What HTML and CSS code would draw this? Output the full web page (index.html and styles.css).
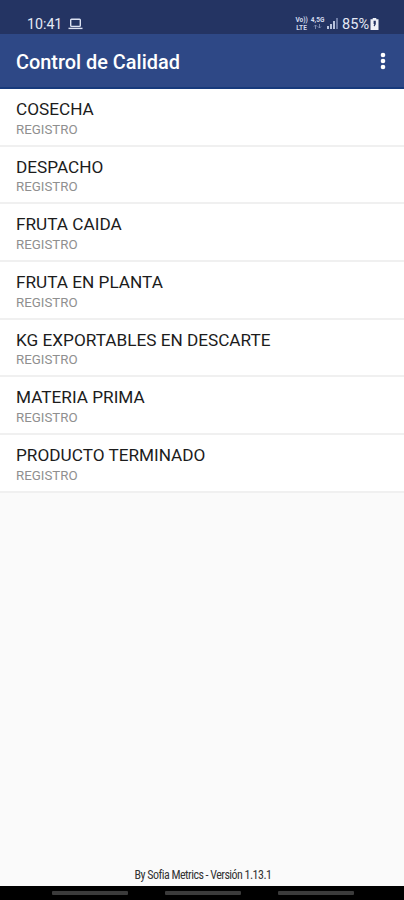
FILE: index.html
```
<!DOCTYPE html>
<html lang="es">
<head>
    <meta charset="UTF-8">
    <meta name="viewport" content="width=device-width, initial-scale=1.0">
    <title>Control de Calidad</title>
    <link rel="stylesheet" href="styles.css">
</head>
<body>
    <div class="status">
        <span class="time">10:41</span>
        <svg class="laptop" width="15" height="12" viewBox="0 0 15 12">
            <rect x="2.7" y="1.2" width="9.6" height="7.2" rx="0.8"/>
            <path d="M0.5 10.4h14"/>
        </svg>
        <div class="status-right">
            <div class="net"><span>Vo))</span><span>LTE</span></div>
            <div class="net data">
                <span>4,5G</span>
                <svg width="9" height="5" viewBox="0 0 9 5">
                    <path d="M2.5 5V1M1 2.5L2.5 1L4 2.5M6.5 0v4M5 2.5L6.5 4L8 2.5"/>
                </svg>
            </div>
            <svg class="signal" width="11" height="11" viewBox="0 0 11 11">
                <path d="M0 8h2v3H0zM3 6h2v5H3zM6 3h2v8H6z"/>
                <path class="dim" d="M9 0h2v11H9z"/>
            </svg>
            <span class="percent">85%</span>
            <svg class="battery" width="9" height="12" viewBox="0 0 9 12">
                <path d="M2.7 0h3.6v1.3H8.5V12H0.5V1.3h2.2z"/>
                <path class="bolt" d="M3.6 2.8h2.2v3.4l-1.3 2.3-0.9-0.9 0.8-1.6h-0.8z"/>
            </svg>
        </div>
    </div>
    <header>
        <h1>Control de Calidad</h1>
        <svg class="menu" width="6" height="18" viewBox="0 0 6 18">
            <circle cx="3" cy="3" r="2.3"/>
            <circle cx="3" cy="9" r="2.3"/>
            <circle cx="3" cy="15" r="2.3"/>
        </svg>
    </header>
    <ul class="list">
        <li><h2>COSECHA</h2><p>REGISTRO</p></li>
        <li><h2>DESPACHO</h2><p>REGISTRO</p></li>
        <li><h2>FRUTA CAIDA</h2><p>REGISTRO</p></li>
        <li><h2>FRUTA EN PLANTA</h2><p>REGISTRO</p></li>
        <li><h2>KG EXPORTABLES EN DESCARTE</h2><p>REGISTRO</p></li>
        <li><h2>MATERIA PRIMA</h2><p>REGISTRO</p></li>
        <li><h2>PRODUCTO TERMINADO</h2><p>REGISTRO</p></li>
    </ul>
    <footer>By Sofia Metrics - Versión 1.13.1</footer>
    <nav>
        <span></span>
        <span></span>
        <span></span>
    </nav>
</body>
</html>
```
FILE: styles.css
```
* {
    box-sizing: border-box;
    margin: 0;
    padding: 0;
}

body {
    height: 900px;
    display: flex;
    flex-direction: column;
    overflow: hidden;
    background-color: #fafafa;
    font-family: Roboto, sans-serif;
}

.status {
    height: 34px;
    padding: 13px 25px 0 27px;
    display: flex;
    align-items: flex-start;
    background-color: #243463;
    color: #e4e9f5;
}

.time {
    font-size: 14.2px;
    line-height: 22px;
}

.laptop {
    margin: 5px 0 0 6px;
    fill: none;
    stroke: #dce2f2;
    stroke-width: 1.4;
}

.status-right {
    margin-left: auto;
    display: flex;
}

.net {
    width: 13px;
    margin: 3px 3px 0 0;
    display: flex;
    flex-direction: column;
    align-items: center;
    font-size: 6.5px;
    font-weight: 700;
    line-height: 8px;
    color: #d3daec;
}

.data svg {
    fill: none;
    stroke: #8794b8;
    stroke-width: 0.9;
}

.signal {
    margin: 5px 4px 0 0;
    fill: #b9c3dc;
}

.signal .dim {
    fill: #6d7ba4;
}

.percent {
    padding-top: 1px;
    font-size: 14.5px;
    line-height: 22px;
}

.battery {
    margin: 5px 0 0 1px;
    fill: #eef1f8;
}

.battery .bolt {
    fill: #243463;
}

header {
    height: 55px;
    padding: 1px 18px 0 16px;
    display: flex;
    align-items: center;
    justify-content: space-between;
    background-color: #2e4886;
    border-bottom: 2px solid #173a7c;
    color: #fff;
}

h1 {
    padding-top: 3px;
    font-size: 19.9px;
    font-weight: 500;
    line-height: 24px;
}

.menu {
    fill: #fff;
}

.list {
    list-style-type: none;
    background-color: #fff;
}

li {
    height: 57.7px;
    padding: 10px 16px 0;
    border-bottom: 2px solid #f0f0f0;
}

h2 {
    font-size: 17.2px;
    font-weight: 400;
    line-height: 20px;
    color: #1c1c1c;
}

p {
    padding-top: 0.6px;
    font-size: 13.3px;
    line-height: 20px;
    color: #8f8f8f;
}

footer {
    margin-top: auto;
    height: 22px;
    padding-left: 2px;
    text-align: center;
    font-family: "Liberation Sans Narrow", "Roboto Condensed", Roboto, sans-serif;
    font-size: 12px;
    letter-spacing: -0.53px;
    line-height: 23px;
    color: #333;
}

nav {
    height: 14px;
    padding: 5px 50px 0 52px;
    display: flex;
    justify-content: space-between;
    background-color: #000;
}

nav span {
    width: 76px;
    height: 4px;
    border-radius: 1px;
    background-color: #3b3b3b;
}
```
